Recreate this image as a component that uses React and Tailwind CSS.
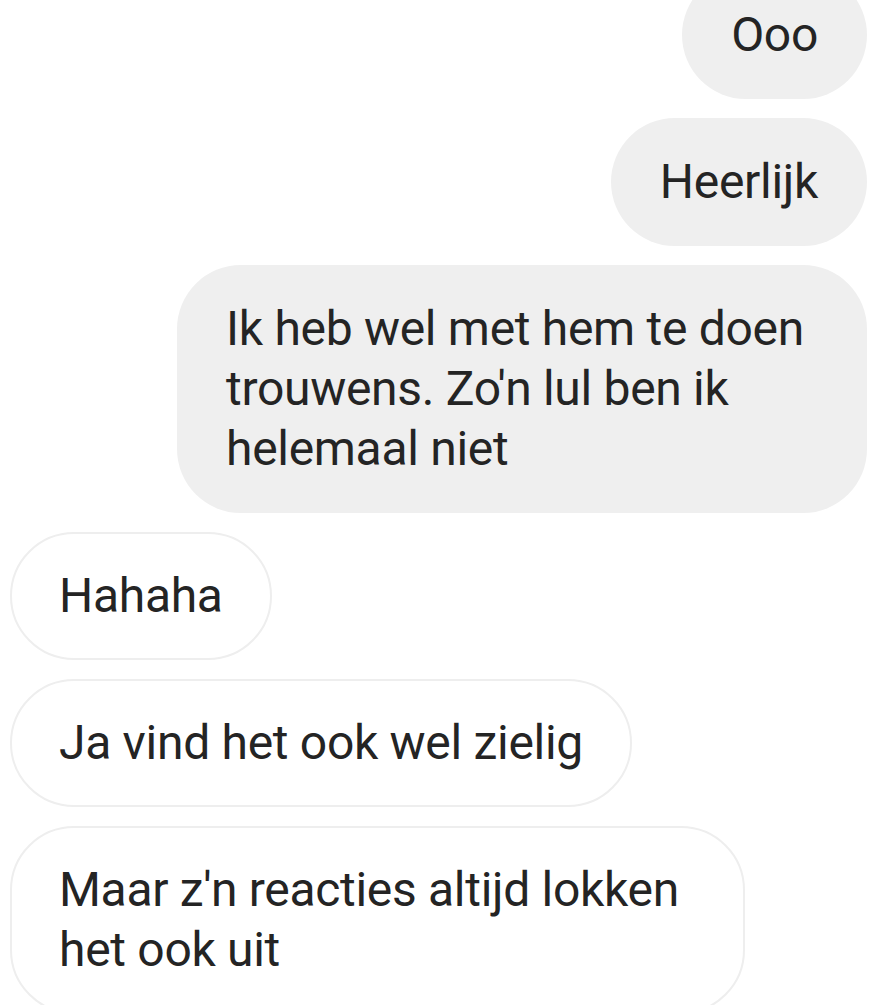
// Chatgesprek: verzonden berichten rechts (grijs), ontvangen links (wit met rand)
const messages = [
  { id: 1, mine: true, lines: ['Ooo'] },
  { id: 2, mine: true, lines: ['Heerlijk'] },
  { id: 3, mine: true, lines: ['Ik heb wel met hem te doen', "trouwens. Zo'n lul ben ik", 'helemaal niet'], width: 'w-[690px]' },
  { id: 4, mine: false, lines: ['Hahaha'] },
  { id: 5, mine: false, lines: ['Ja vind het ook wel zielig'] },
  { id: 6, mine: false, lines: ["Maar z'n reacties altijd lokken", 'het ook uit'], width: 'w-[735px]' },
]

function Bubble({ msg }) {
  const base = 'rounded-[64px] text-[48px] leading-[60px] tracking-[-0.3px] text-[#242424] whitespace-nowrap'
  const style = msg.mine
    ? 'bg-[#efefef] px-[49px] py-[34px]'
    : 'bg-white border-2 border-[#eeeeee] px-[47px] py-[32px]'

  return (
    <div className={`flex ${msg.mine ? 'justify-end' : 'justify-start'}`}>
      <div className={`${base} ${style} ${msg.width || ''}`}>
        {msg.lines.map((line, i) => (
          <div key={i}>{line}</div>
        ))}
      </div>
    </div>
  )
}

export default function App() {
  return (
    <div
      className="w-[876px] h-[1005px] overflow-hidden bg-white"
      style={{ fontFamily: 'Roboto, "Noto Sans", sans-serif' }}
    >
      <div className="-mt-[29px] flex flex-col gap-[19px] pl-[10px] pr-[9px]">
        {messages.map(msg => (
          <Bubble key={msg.id} msg={msg} />
        ))}
      </div>
    </div>
  )
}
